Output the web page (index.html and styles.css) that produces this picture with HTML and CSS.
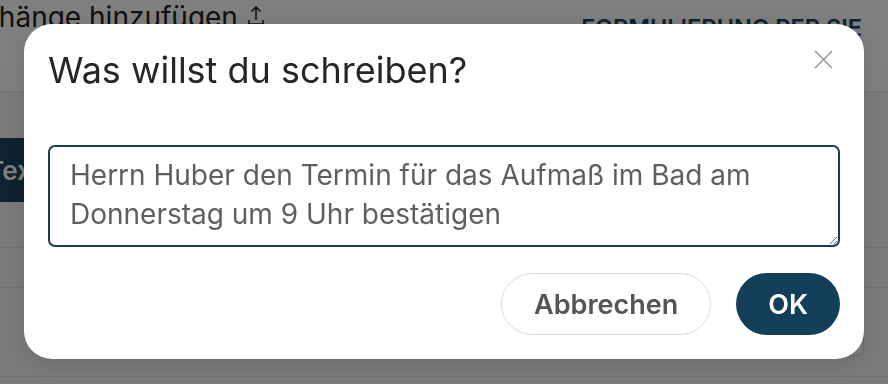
FILE: index.html
```html
<!DOCTYPE html>
<html>
<head>
  <meta charset="utf-8">
  <title>Was willst du schreiben?</title>
  <link rel="stylesheet" href="styles.css">
</head>
<body>

<div class="page">
  <div class="page-head">
    <div class="attach">
      Anhänge hinzufügen
      <svg class="attach-icon" width="20" height="22" viewBox="0 0 20 22">
        <path d="M10 3v13M5.5 7.5L10 3l4.5 4.5M3 16v4h14v-4" fill="none" stroke="#222" stroke-width="1.6"/>
      </svg>
    </div>
    <div class="mode">FORMULIERUNG PER SIE</div>
  </div>
  <div class="page-row tall">
    <button class="dark-btn">Text einfügen</button>
  </div>
  <div class="page-row short"></div>
  <div class="page-row last">
    <div class="card"></div>
  </div>
</div>

<div class="overlay">
  <div class="dialog">
    <div class="dialog-head">
      <h2 class="dialog-title">Was willst du schreiben?</h2>
      <button class="close" aria-label="Schließen">
        <svg width="19" height="19" viewBox="0 0 19 19">
          <path d="M1 1l17 17M18 1L1 18" stroke="#9a9a9a" stroke-width="1.6" fill="none"/>
        </svg>
      </button>
    </div>
    <textarea class="prompt">Herrn Huber den Termin für das Aufmaß im Bad am Donnerstag um 9 Uhr bestätigen</textarea>
    <div class="actions">
      <button class="btn btn-cancel">Abbrechen</button>
      <button class="btn btn-ok">OK</button>
    </div>
  </div>
</div>

</body>
</html>
```

FILE: styles.css
```css
body {
  margin: 0;
  font-family: Inter, "Noto Sans", sans-serif;
  background-color: #f6f6f6;
  overflow: hidden;
}
button {
  font-family: inherit;
  cursor: pointer;
}

/* page behind the dialog */
.page {
  width: 888px;
  height: 384px;
  overflow: hidden;
}
.page-head {
  display: flex;
  justify-content: space-between;
  align-items: flex-start;
  height: 91px;
  background-color: #fff;
  border-bottom: 1px solid #e2e2e2;
}
.attach {
  display: flex;
  align-items: flex-start;
  gap: 8px;
  margin-left: -37px;
  font-size: 28px;
  line-height: 34px;
  color: #222;
  white-space: nowrap;
}
.attach-icon {
  margin-top: 4px;
}
.mode {
  margin-top: 14px;
  margin-right: 26px;
  font-size: 23.5px;
  line-height: 28px;
  font-weight: 600;
  color: #1d4563;
}
.page-row {
  border-bottom: 1px solid #e2e2e2;
}
.page-row.tall {
  height: 109px;
  padding-top: 46px;
}
.page-row.short {
  height: 39px;
}
.page-row.last {
  display: flex;
  justify-content: flex-end;
  height: 88px;
}
.dark-btn {
  height: 64px;
  margin-left: -37px;
  padding: 0 24px;
  border: none;
  background-color: #1c4460;
  color: #fff;
  font-size: 26px;
  font-weight: 600;
}
.card {
  width: 400px;
  height: 58px;
  margin: 8px 24px 0 0;
  border: 1px solid #cfcfcf;
  border-radius: 8px;
  background-color: #fff;
}

/* modal */
.overlay {
  position: fixed;
  inset: 0;
  display: flex;
  justify-content: center;
  align-items: flex-start;
  background-color: rgba(0,0,0,0.5);
}
.dialog {
  box-sizing: border-box;
  width: 840px;
  margin-top: 24px;
  padding: 24px;
  border-radius: 28px;
  background-color: #fff;
  box-shadow: 0 6px 24px rgba(0,0,0,0.12);
}
.dialog-head {
  display: flex;
  justify-content: space-between;
  align-items: flex-start;
}
.dialog-title {
  margin: 0 0 53px;
  font-size: 36px;
  line-height: 44px;
  font-weight: 400;
  color: #262626;
}
.close {
  display: block;
  width: 19px;
  height: 19px;
  margin: 2px 7px 0 0;
  padding: 0;
  border: none;
  background: none;
}
.close svg {
  display: block;
}
.prompt {
  display: block;
  box-sizing: border-box;
  width: 100%;
  height: 102px;
  margin: 0;
  padding: 9px 20px 11px;
  border: 2px solid #1b3d55;
  border-radius: 7px;
  font-family: inherit;
  font-size: 28px;
  line-height: 39px;
  color: #5f5f5f;
  outline: none;
}
.actions {
  display: flex;
  justify-content: flex-end;
  gap: 25px;
  margin-top: 26px;
}
.btn {
  height: 62px;
  border-radius: 31px;
  font-size: 27px;
  font-weight: 600;
}
.btn-cancel {
  padding: 0 32px;
  border: 1.5px solid #dcdcdc;
  background-color: #fff;
  color: #555;
}
.btn-ok {
  padding: 0 32px;
  border: none;
  background-color: #143f5a;
  color: #fff;
}
```
